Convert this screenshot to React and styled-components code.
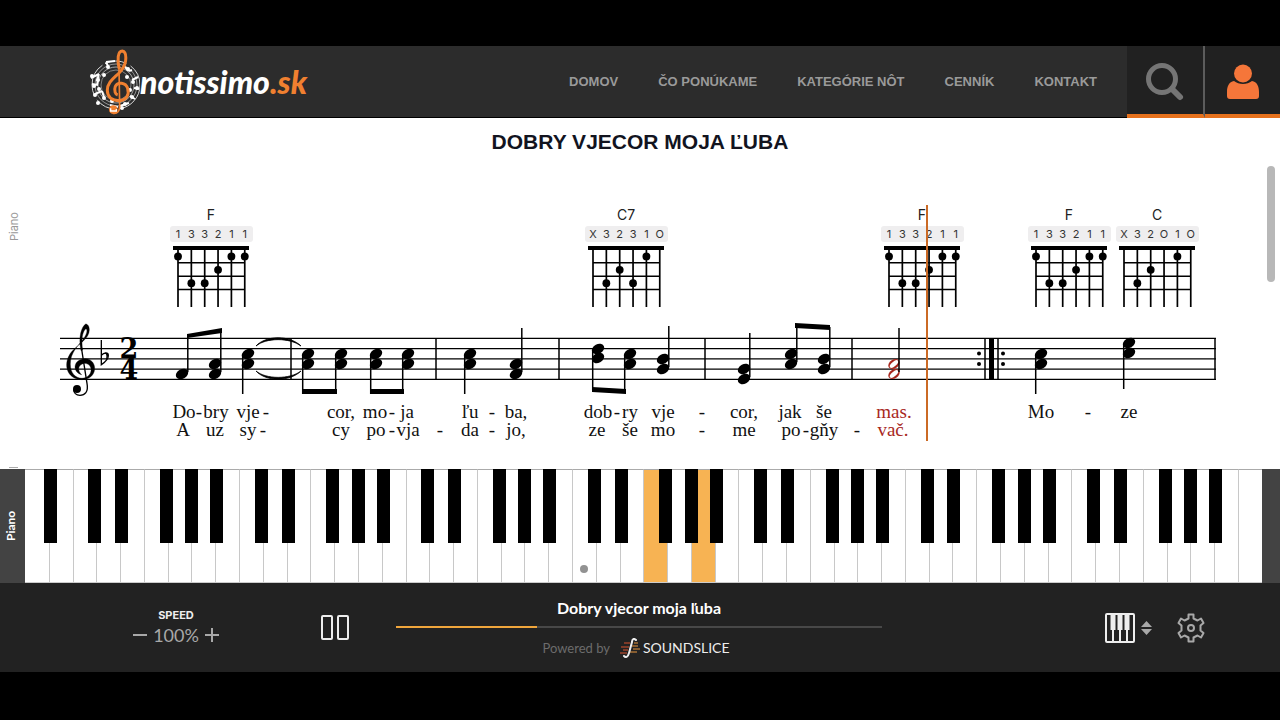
import styled, { createGlobalStyle } from 'styled-components';

const GlobalStyle = createGlobalStyle`
  * {
    box-sizing: border-box;
  }
  body {
    margin: 0;
    background: #000;
    font-family: "Liberation Sans", Arial, sans-serif;
  }
  button {
    padding: 0;
    border: none;
    background: none;
    font: inherit;
    color: inherit;
    cursor: pointer;
  }
`;

const Page = styled.div`
  padding: 46px 0 48px;
`;
const Header = styled.header`
  display: flex;
  align-items: stretch;
  height: 72px;
  background: #2c2c2c;
`;
const HeaderMain = styled.div`
  flex: 1;
  display: flex;
  align-items: center;
  justify-content: space-between;
  padding: 0 30px 0 88px;
  border-bottom: 1px solid #000;
`;
const Logo = styled.a`
  display: flex;
  align-items: center;
  color: #fff;
  font-family: Lato, sans-serif;
  font-size: 32px;
  font-weight: 900;
  font-style: italic;
  text-decoration: none;
`;
const LogoAccent = styled.span`
  color: #f08030;
`;
const Nav = styled.nav`
  display: flex;
  gap: 40px;
`;
const NavLink = styled.a`
  color: #9a9a9a;
  font-size: 13px;
  font-weight: bold;
  line-height: 20px;
  text-decoration: none;
`;
const HeaderButton = styled.button`
  display: flex;
  align-items: center;
  justify-content: center;
  width: ${({ $wide }) => ($wide ? 78 : 75)}px;
  padding-top: 4px;
  background: #212121;
  border-bottom: 4px solid #e6711c;
  border-right: ${({ $wide }) => ($wide ? '2px solid #5c5c5c' : 'none')};
`;

const Sheet = styled.main`
  position: relative;
  background: #fff;
`;
const Title = styled.h1`
  margin: 0;
  padding: 10px 0 4px;
  color: #12141f;
  font-size: 21px;
  line-height: 28px;
  font-weight: bold;
  text-align: center;
`;
const Score = styled.svg`
  display: block;
  width: 100%;
`;
const ScrollThumb = styled.div`
  position: absolute;
  top: 48px;
  right: 5px;
  width: 8px;
  height: 116px;
  border-radius: 4px;
  background: #b8b8b8;
`;

const Keyboard = styled.section`
  display: flex;
  height: 114px;
  background: #434343;
`;
const KeyboardLabel = styled.div`
  display: flex;
  align-items: center;
  justify-content: center;
  width: 25px;
  padding-left: 4px;
  color: #fff;
  font-family: Lato, sans-serif;
  font-size: 12px;
  font-weight: bold;
  writing-mode: vertical-rl;
  transform: rotate(180deg);
`;
const Keys = styled.div`
  flex: 1;
  display: flex;
  margin-right: 18px;
`;
const KeySlot = styled.div`
  position: relative;
  flex: 1;
`;
const WhiteKey = styled.button`
  display: flex;
  align-items: flex-end;
  justify-content: center;
  width: 100%;
  height: 100%;
  padding-bottom: 9px;
  background: ${({ $active }) => ($active ? '#f7b353' : '#fff')};
  border-top: 1px solid #aaa;
  border-bottom: 1px solid #ccc;
  border-left: ${({ $first }) => ($first ? 'none' : '1px solid #c8c8c8')};
`;
const BlackKey = styled.button`
  position: absolute;
  z-index: 1;
  top: 0;
  left: ${({ $shift }) => $shift}px;
  width: 13px;
  height: 74px;
  background: #000;
`;
const MiddleDot = styled.span`
  width: 8px;
  height: 8px;
  border-radius: 50%;
  background: #929292;
`;

const Player = styled.footer`
  display: grid;
  grid-template-columns: 396px 1fr 398px;
  height: 89px;
  background: #222;
  color: #fff;
  font-family: Lato, sans-serif;
`;
const PlayerLeft = styled.div`
  display: flex;
  align-items: center;
  gap: 100px;
  padding: 0 0 2px 132px;
`;
const Speed = styled.div`
  display: flex;
  flex-direction: column;
  align-items: center;
  width: 88px;
`;
const SpeedLabel = styled.span`
  color: #eee;
  font-family: Inter, sans-serif;
  font-size: 11px;
  line-height: 16px;
  font-weight: bold;
`;
const SpeedRow = styled.div`
  display: flex;
  align-items: center;
  gap: 5px;
  color: #a8a8a8;
  font-size: 18px;
  line-height: 24px;
`;
const IconButton = styled.button`
  display: flex;
  align-items: center;
  gap: 5px;
`;
const PlayerCenter = styled.div`
  display: flex;
  flex-direction: column;
  align-items: center;
  padding-top: 15px;
`;
const TrackTitle = styled.div`
  font-size: 16px;
  line-height: 20px;
  font-weight: bold;
`;
const Progress = styled.input`
  appearance: none;
  width: 100%;
  height: 2px;
  margin: 8px 0 8px;
  background: linear-gradient(to right, #f0a63c ${({ value }) => value}%, #484848 ${({ value }) => value}%);
  &::-webkit-slider-thumb {
    appearance: none;
    width: 2px;
    height: 2px;
  }
`;
const Powered = styled.div`
  display: flex;
  align-items: center;
  gap: 10px;
  margin-right: 6px;
  color: #6c6c6c;
  font-size: 13px;
  line-height: 24px;
`;
const Brand = styled.a`
  display: flex;
  align-items: center;
  gap: 3px;
  color: #eee;
  font-size: 14px;
  text-decoration: none;
`;
const PlayerRight = styled.div`
  display: flex;
  align-items: center;
  gap: 25px;
  padding-left: 222px;
`;

const LINKS = ['DOMOV', 'ČO PONÚKAME', 'KATEGÓRIE NÔT', 'CENNÍK', 'KONTAKT'];

const F = { name: 'F', fingers: '133211', frets: [1, 3, 3, 2, 1, 1] };
const CHORDS = [
  { x: 211, ...F },
  { x: 626, name: 'C7', fingers: 'X3231O', frets: [0, 3, 2, 3, 1, 0] },
  { x: 922, ...F },
  { x: 1069, ...F },
  { x: 1157, name: 'C', fingers: 'X32O1O', frets: [0, 3, 2, 0, 1, 0] },
];

// x of the note head, y of each head, side of the stem, y where the stem ends
const NOTES = [
  [182, [214], 'up', 174],
  [215, [204, 214], 'up', 170],
  [248, [194, 204], 'down', 234],
  [308, [194, 204], 'down', 234],
  [341, [194, 204], 'down', 234],
  [376, [194, 204], 'down', 234],
  [408, [194, 204], 'down', 234],
  [470, [194, 204], 'down', 234],
  [516, [204, 214], 'up', 168],
  [598, [189, 198], 'down', 230],
  [630, [194, 204], 'down', 233],
  [663, [199, 209], 'up', 166],
  [744, [209, 219], 'up', 173],
  [791, [194, 204], 'up', 164],
  [824, [199, 209], 'up', 167],
  [1041, [194, 204], 'down', 234],
  [1129, [183, 193], 'down', 229],
];
const BEAMS = [
  '187,174 222,168 222,173 187,178',
  '302,229 337,229 337,234 302,234',
  '370,229 404,229 404,234 370,234',
  '592,227 626,229 626,234 592,232',
  '795,163 830,165 830,170 795,168',
];
const BARS = [291, 436, 559, 705, 852, 985, 998, 1215];

const LYRICS = [
  ['Do', 184, 1], ['-', 199, 1], ['bry', 216, 1], ['vje', 248, 1], ['-', 266, 1],
  ['cor,', 341, 1], ['mo', 375, 1], ['-', 392, 1], ['ja', 407, 1],
  ['ľu', 470, 1], ['-', 492, 1], ['ba,', 516, 1],
  ['dob', 598, 1], ['-', 617, 1], ['ry', 630, 1], ['vje', 663, 1], ['-', 702, 1],
  ['cor,', 744, 1], ['jak', 790, 1], ['še', 824, 1], ['mas.', 894, 1, true],
  ['Mo', 1041, 1], ['-', 1088, 1], ['ze', 1129, 1],
  ['A', 183, 2], ['uz', 215, 2], ['sy', 248, 2], ['-', 263, 2],
  ['cy', 341, 2], ['po', 376, 2], ['-', 392, 2], ['vja', 408, 2], ['-', 440, 2],
  ['da', 470, 2], ['-', 492, 2], ['jo,', 516, 2],
  ['ze', 597, 2], ['še', 630, 2], ['mo', 663, 2], ['-', 702, 2],
  ['me', 744, 2], ['po', 791, 2], ['-', 806, 2], ['gňy', 824, 2], ['-', 857, 2],
  ['vač.', 893, 2, true],
];

// 52 white keys from A0 to C8, the shift is where the black key starts
const WHITE_NAMES = ['A', 'B', 'C', 'D', 'E', 'F', 'G'];
const BLACK_SHIFT = { B: -5, D: -8, E: -5, G: -8, A: -6 };
const ACTIVE_KEYS = [26, 28];
const MIDDLE_C = 23;

function Clef() {
  return (
    <g>
      <path d="M246 569C196 568 188 516 216 484C236 462 268 446 268 420C268 406 261 402 257 402C245 410 234 440 243 482L248 480C244 450 246 425 258 416C264 419 260 434 250 447C234 468 211 488 211 522C211 550 226 564 246 565Z" stroke="#000" />
      <path d="M246 569C294 569 296 508 256 506C216 508 218 548 245 554C232 544 232 523 254 520C282 522 280 563 246 565Z" stroke="#000" />
      <path d="M245 478L261 580C266 606 254 616 240 616C228 616 221 608 221 598" fill="none" stroke="#000" strokeWidth="4" />
      <circle cx="231" cy="597" r="12" />
    </g>
  );
}

function Emblem() {
  return (
    <svg width="52" height="70" viewBox="0 0 52 70" aria-hidden="true">
      <g fill="none" stroke="#d8d8d8">
        <circle cx="28" cy="38" r="24" strokeWidth="1" strokeDasharray="34 3 22 5" />
        <circle cx="28" cy="38" r="21" strokeWidth="1" opacity="0.6" />
        <circle cx="28" cy="38" r="18" strokeWidth="1" opacity="0.7" />
        <circle cx="28" cy="38" r="15" strokeWidth="1" opacity="0.5" />
        <path d="M3 31l8 -4M11 27l-2 7M4 37l6 1M9 38l1 -5M7 47l7 -3M14 44l2 6M18 15l9 -1M18 15l2 4M36 19l5 5M41 24l3 -1M44 33l6 -3M46 41l5 1M42 49l5 3M32 59l9 -3M22 58l8 2" strokeWidth="2" stroke="#fff" />
      </g>
      <g fill="#fff">
        <circle cx="4" cy="29" r="2" /><circle cx="10" cy="33" r="2" /><circle cx="6" cy="39" r="2" />
        <circle cx="11" cy="42" r="2" /><circle cx="7" cy="48" r="2" /><circle cx="16" cy="51" r="2" />
        <circle cx="10" cy="56" r="2" /><circle cx="20" cy="20" r="2" /><circle cx="40" cy="22" r="2" />
        <circle cx="45" cy="35" r="2" /><circle cx="49" cy="41" r="2" /><circle cx="44" cy="50" r="2" />
        <circle cx="37" cy="57" r="2" /><circle cx="24" cy="54" r="2" /><circle cx="34" cy="61" r="2" />
        <circle cx="42" cy="43" r="2" /><circle cx="39" cy="30" r="2" /><circle cx="16" cy="28" r="2" />
      </g>
      <g fill="none" stroke="#f08030" transform="translate(-3 0) scale(0.3333)">
        <path d="M103 66C96 40 98 12 112 12C126 14 126 46 112 66C98 88 67 100 67 130C67 152 84 161 103 161C126 160 133 142 128 124C122 106 98 104 91 118C86 132 92 142 98 144" strokeWidth="9" />
        <path d="M102 62L104 176C104 192 98 201 84 199" strokeWidth="5" />
        <circle cx="85" cy="188" r="13" fill="#f08030" stroke="none" />
        <path d="M77 184V192H94V186" stroke="#fff" strokeWidth="4" />
      </g>
    </svg>
  );
}

function Chord({ x, name, fingers, frets }) {
  const strings = [0, 1, 2, 3, 4, 5].map((i) => x - 33 + i * 13.35);
  return (
    <g>
      <text x={x} y="60" fontSize="14" fill="#222" textAnchor="middle">{name}</text>
      <rect x={x - 41} y="66" width="83" height="16" rx="3" fill="#efeeef" />
      <rect x={x - 38} y="86" width="76" height="4" />
      {strings.map((sx, i) => (
        <g key={sx}>
          <text x={sx} y="78" fontSize="11" fill="#333" textAnchor="middle">{fingers[i]}</text>
          <path d={`M${sx} 90V147`} stroke="#000" strokeWidth="1.7" />
          {frets[i] > 0 && <circle cx={sx} cy={83 + frets[i] * 13.4} r="3.9" />}
        </g>
      ))}
      {[102.7, 116.3, 129.5].map((y) => (
        <path key={y} d={`M${strings[0]} ${y}H${strings[5]}`} stroke="#000" strokeWidth="1.5" />
      ))}
    </g>
  );
}

function Note({ note: [x, heads, stem, end] }) {
  const stemX = stem === 'up' ? x + 5.8 : x - 5.3;
  const from = stem === 'up' ? heads[heads.length - 1] - 2 : heads[0] + 1;
  return (
    <g>
      {heads.map((y) => (
        <ellipse key={y} cx={x} cy={y} rx="6.6" ry="4.7" transform={`rotate(-28 ${x} ${y})`} />
      ))}
      <path d={`M${stemX} ${from}V${end}`} stroke="#000" strokeWidth="1.5" />
    </g>
  );
}

function ScoreView() {
  return (
    <Score viewBox="0 0 1280 309" fontFamily="Inter, sans-serif" role="img" aria-label="Dobry vjecor moja ľuba">
      <text transform="translate(18 81) rotate(-90)" fontSize="11" fill="#999">Piano</text>
      <path d="M9 307.500h9" stroke="#aaa" />
      {CHORDS.map((chord) => <Chord key={chord.x} {...chord} />)}

      {[0, 1, 2, 3, 4].map((i) => (
        <path key={i} d={`M60 ${178.4 + i * 10.25}H1216`} stroke="#000" strokeWidth="1.3" />
      ))}
      {BARS.map((x) => <path key={x} d={`M${x} 178V220`} stroke="#000" strokeWidth="1.5" />)}
      <rect x="989" y="178" width="5" height="42" />
      {[979, 1003].map((x) => (
        <g key={x}>
          <circle cx={x} cy="193.500" r="2" />
          <circle cx={x} cy="204" r="2" />
        </g>
      ))}

      <g transform="translate(0 30) scale(0.3333)">
        <Clef />
        <path d="M304 450V524C314 517 325 507 325 497C325 486 312 487 304 496" fill="none" stroke="#000" strokeWidth="4" />
        <path d="M314 489C326 486 328 500 317 512C320 500 321 494 314 489Z" />
      </g>
      <g fontFamily="DejaVu Serif, serif" fontSize="27" fontWeight="bold" textAnchor="middle">
        <text x="129" y="198">2</text>
        <text x="129" y="219">4</text>
      </g>

      {NOTES.map((note) => <Note key={note[0]} note={note} />)}
      {BEAMS.map((points) => <polygon key={points} points={points} />)}
      <path d="M256 186C266 175 290 175 301 186C290 177.500 266 177.500 256 186Z" stroke="#000" strokeWidth="0.8" />
      <path d="M256 211C266 222 290 222 301 211C290 219.500 266 219.500 256 211Z" stroke="#000" strokeWidth="0.8" />

      {[204, 214].map((y) => (
        <g key={y} transform={`rotate(-32 894 ${y})`}>
          <ellipse cx="894" cy={y} rx="6.2" ry="4.4" fill="#a8281e" />
          <ellipse cx="894" cy={y} rx="5.2" ry="2.2" fill="#fff" transform={`rotate(-8 894 ${y})`} />
        </g>
      ))}
      <path d="M899 212V168" stroke="#000" strokeWidth="1.5" />

      <g fontFamily="Liberation Serif, serif" fontSize="19" textAnchor="middle">
        {LYRICS.map(([syllable, x, line, active]) => (
          <text key={`${line}-${x}`} x={x} y={line === 1 ? 258 : 276} fill={active ? '#a8281e' : '#111'}>
            {syllable}
          </text>
        ))}
      </g>
      <rect x="926" y="45" width="2" height="236" fill="#cb6a25" />
    </Score>
  );
}

function PianoKeys() {
  return (
    <Keys>
      {Array.from({ length: 52 }, (_, i) => {
        const name = WHITE_NAMES[i % 7];
        const shift = BLACK_SHIFT[name];
        return (
          <KeySlot key={i}>
            {i > 0 && shift && <BlackKey $shift={shift} aria-label={`${name} flat`} />}
            <WhiteKey $first={i === 0} $active={ACTIVE_KEYS.includes(i)} aria-label={name}>
              {i === MIDDLE_C && <MiddleDot />}
            </WhiteKey>
          </KeySlot>
        );
      })}
    </Keys>
  );
}

function App() {
  return (
    <Page>
      <GlobalStyle />
      <Header>
        <HeaderMain>
          <Logo href="#">
            <Emblem />
            <span>notissimo<LogoAccent>.sk</LogoAccent></span>
          </Logo>
          <Nav>
            {LINKS.map((link) => <NavLink key={link} href="#">{link}</NavLink>)}
          </Nav>
        </HeaderMain>
        <HeaderButton $wide aria-label="Hľadať">
          <svg width="40" height="40" viewBox="0 0 40 40" fill="none" stroke="#757575">
            <circle cx="17" cy="17" r="13.500" strokeWidth="5" />
            <path d="M27 27L35 35" strokeWidth="6" strokeLinecap="round" />
          </svg>
        </HeaderButton>
        <HeaderButton aria-label="Prihlásenie">
          <svg width="34" height="36" viewBox="0 0 34 36" fill="#f5763a">
            <path d="M8 17C3 18 1 22 1 28V32C1 34 2 35 4 35H30C32 35 33 34 33 32V28C33 22 31 18 26 17C21 21 13 21 8 17Z" />
            <circle cx="17" cy="9.500" r="9" />
          </svg>
        </HeaderButton>
      </Header>

      <Sheet>
        <Title>DOBRY VJECOR MOJA ĽUBA</Title>
        <ScoreView />
        <ScrollThumb />
      </Sheet>

      <Keyboard>
        <KeyboardLabel>Piano</KeyboardLabel>
        <PianoKeys />
      </Keyboard>

      <Player>
        <PlayerLeft>
          <Speed>
            <SpeedLabel>SPEED</SpeedLabel>
            <SpeedRow>
              <IconButton aria-label="Slower">
                <svg width="16" height="16" stroke="#a8a8a8" strokeWidth="2"><path d="M1 8H15" /></svg>
              </IconButton>
              <span>100%</span>
              <IconButton aria-label="Faster">
                <svg width="16" height="16" stroke="#a8a8a8" strokeWidth="2"><path d="M1 8H15M8 1V15" /></svg>
              </IconButton>
            </SpeedRow>
          </Speed>
          <IconButton aria-label="Pause">
            <svg width="30" height="26" viewBox="0 0 30 26" fill="none" stroke="#eee" strokeWidth="2">
              <rect x="2" y="2" width="10" height="23" rx="1" />
              <rect x="18" y="2" width="10" height="23" rx="1" />
            </svg>
          </IconButton>
        </PlayerLeft>
        <PlayerCenter>
          <TrackTitle>Dobry vjecor moja ľuba</TrackTitle>
          <Progress type="range" min="0" max="100" value={29} readOnly aria-label="Position" />
          <Powered>
            <span>Powered by</span>
            <Brand href="#">
              <svg width="20" height="20" viewBox="0 0 20 20" fill="none">
                <path d="M4 5H10M1 9H9M3 12H8M0 15H7" stroke="#d8532f" />
                <path d="M14 5H18M12 8H18M13 11H20M10 14H17" stroke="#e9963e" />
                <path d="M16 2C14 0 12 1 12 4L9 15C8 19 6 20 4 18" stroke="#eee" strokeWidth="2" strokeLinecap="round" />
              </svg>
              SOUNDSLICE
            </Brand>
          </Powered>
        </PlayerCenter>
        <PlayerRight>
          <IconButton aria-label="Instrument">
            <svg width="32" height="32" viewBox="0 0 32 32">
              <rect x="2" y="2" width="28" height="28" rx="1" fill="none" stroke="#eee" strokeWidth="2" />
              <path d="M9 18V30M16 18V30M23 18V30" stroke="#eee" strokeWidth="2" />
              <path d="M6.500 2h5v16h-5zM13.500 2h5v16h-5zM20.500 2h5v16h-5z" fill="#eee" />
            </svg>
            <svg width="11" height="14" viewBox="0 0 11 14" fill="#a8a8a8">
              <path d="M5.500 0L11 6H0ZM5.500 14L11 8H0Z" />
            </svg>
          </IconButton>
          <IconButton aria-label="Settings">
            <svg width="28" height="30" viewBox="0 0 28 30" fill="none" stroke="#a8a8a8" strokeWidth="2" strokeLinejoin="round">
              <path d="M11.500 1.500H16.500V5.500L20.500 7.500L24 5.500L26.500 10L23.500 12.500V17.500L26.500 20L24 24.500L20.500 22.500L16.500 24.500V28.500H11.500V24.500L7.500 22.500L4 24.500L1.500 20L4.500 17.500V12.500L1.500 10L4 5.500L7.500 7.500L11.500 5.500Z" />
              <circle cx="14" cy="15" r="3" />
            </svg>
          </IconButton>
        </PlayerRight>
      </Player>
    </Page>
  );
}

export default App;
